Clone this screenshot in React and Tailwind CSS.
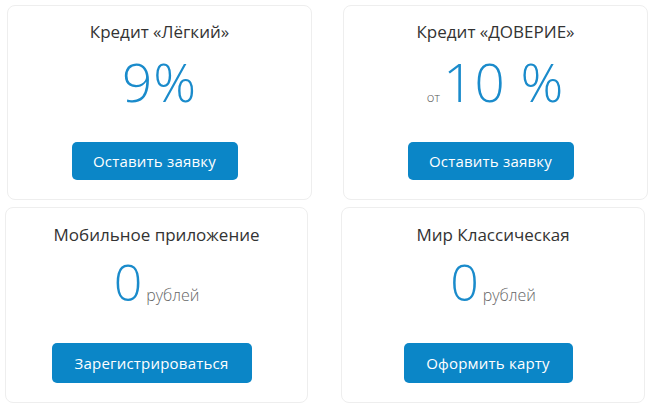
import React from "react";

function Button({ children, className }) {
  return (
    <button
      className={`mr-[10px] rounded-[5px] bg-[#0b86c7] text-white text-[15px] tracking-[0.2px] leading-none ${className}`}
    >
      {children}
    </button>
  );
}

function Card({ className, children }) {
  return (
    <div
      className={`rounded-[8px] border border-[#eeeeee] flex flex-col items-center ${className}`}
    >
      {children}
    </div>
  );
}

export default function App() {
  return (
    <div className="w-[652px] h-[413px] bg-white font-['Open_Sans',sans-serif] text-[#333]">
      {/* Top row */}
      <div className="flex pt-[5px] pl-[7px] gap-[31px]">
        <Card className="w-[305px] h-[195px] pt-[14px]">
          <p className="text-[17px] leading-[24px]">Кредит «Лёгкий»</p>
          <p className="mt-[10px] h-[56px] text-[53px] leading-[56px] font-light text-[#1a8bcb] tracking-[1px]">
            9%
          </p>
          <Button className="mt-[32px] w-[166px] h-[38px]">Оставить заявку</Button>
        </Card>
        <Card className="w-[305px] h-[195px] pt-[14px]">
          <p className="text-[17px] leading-[24px]">Кредит «ДОВЕРИЕ»</p>
          <p className="mt-[10px] h-[56px] text-[53px] leading-[56px] font-light text-[#1a8bcb] tracking-[1px]">
            <span className="text-[13px] leading-none text-[#555] tracking-normal mr-[3px]">от</span>
            10 %
          </p>
          <Button className="mt-[32px] w-[166px] h-[38px]">Оставить заявку</Button>
        </Card>
      </div>

      {/* Bottom row */}
      <div className="flex mt-[7px] pl-[5px] gap-[33px]">
        <Card className="w-[303px] h-[196px] pt-[15px]">
          <p className="text-[17px] leading-[24px]">Мобильное приложение</p>
          <p className="mt-[7px] h-[56px] text-[50px] leading-[56px] font-light text-[#1a8bcb]">
            0
            <span className="ml-[4px] text-[16px] leading-none text-[#666]">рублей</span>
          </p>
          <Button className="mt-[33px] w-[200px] h-[40px]">Зарегистрироваться</Button>
        </Card>
        <Card className="w-[304px] h-[196px] pt-[15px]">
          <p className="text-[17px] leading-[24px]">Мир Классическая</p>
          <p className="mt-[7px] h-[56px] text-[50px] leading-[56px] font-light text-[#1a8bcb]">
            0
            <span className="ml-[4px] text-[16px] leading-none text-[#666]">рублей</span>
          </p>
          <Button className="mt-[33px] w-[169px] h-[40px]">Оформить карту</Button>
        </Card>
      </div>
    </div>
  );
}
